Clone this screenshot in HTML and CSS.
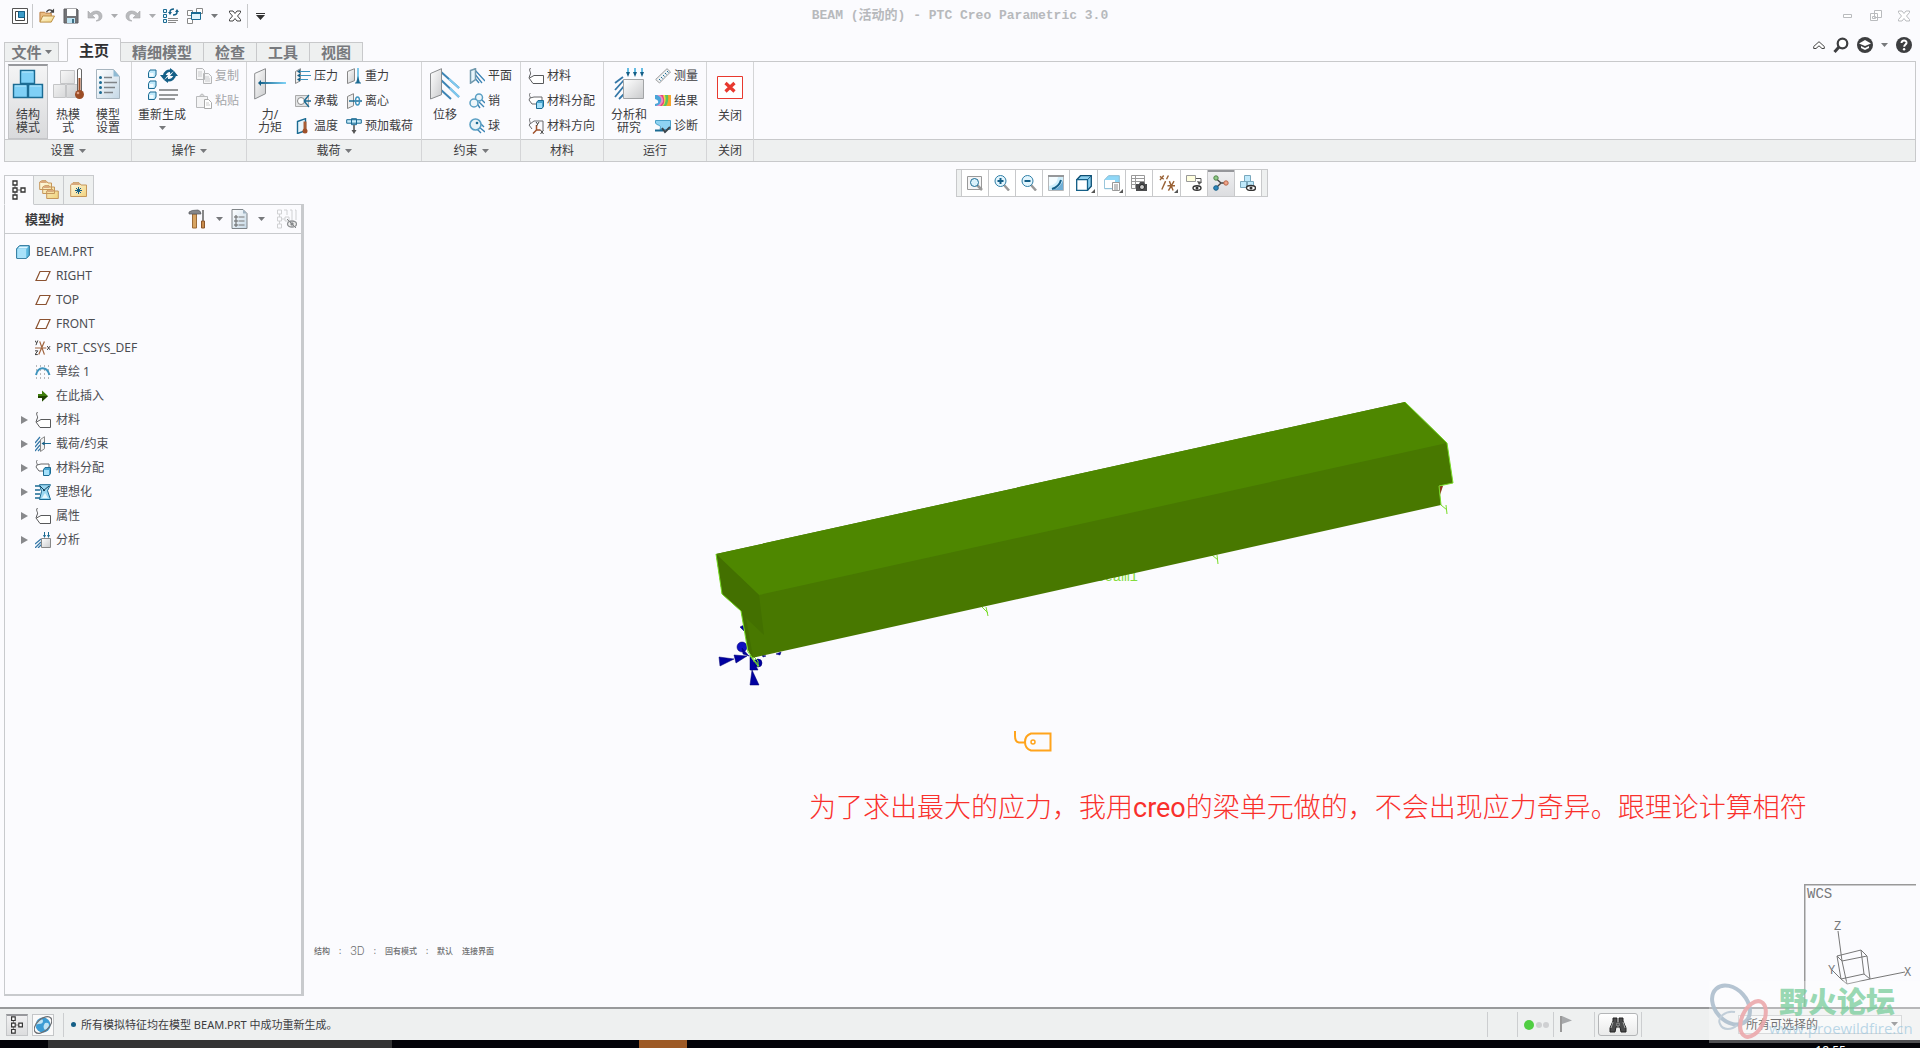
FILE: index.html
```html
<!DOCTYPE html>
<html lang="zh-CN">
<head>
    <meta charset="UTF-8">
    <meta name="viewport" content="width=device-width, initial-scale=1.0">
    <title>BEAM (活动的) - PTC Creo Parametric 3.0</title>
    <link rel="stylesheet" href="styles.css">
</head>
<body>
    <!-- icon sprite -->
    <svg class="sprite" aria-hidden="true">
        <defs>
            <linearGradient id="g-grey" x1="0" y1="0" x2="1" y2="1"><stop offset="0" stop-color="#fff"/><stop offset="1" stop-color="#c9cacc"/></linearGradient>
            <linearGradient id="g-blue" x1="0" y1="0" x2="1" y2="0"><stop offset="0" stop-color="#145f87"/><stop offset="1" stop-color="#7fd3f7"/></linearGradient>
            <linearGradient id="g-fold" x1="0" y1="0" x2="1" y2="1"><stop offset="0" stop-color="#fffbe6"/><stop offset="1" stop-color="#f0d27c"/></linearGradient>
            <linearGradient id="g-page" x1="0" y1="0" x2="1" y2="1"><stop offset="0" stop-color="#fff"/><stop offset="1" stop-color="#c5d8e6"/></linearGradient>
        </defs>
        <symbol id="caret" viewBox="0 0 7 4"><path d="M0 0h7L3.5 4z" fill="#77797c"/></symbol>
        <symbol id="app" viewBox="0 0 16 16"><path d="M.5.5h15v15H.5z" fill="#fff" stroke="#555"/><path d="M3.5 3.5h9v9h-9z" fill="#fff" stroke="#444"/><path d="M6.5 3.5h6v6h-6z" fill="#3d9cc9" stroke="#145f87"/></symbol>
        <symbol id="open" viewBox="0 0 17 16"><path d="M1 14V4h5l1 1h6v3" fill="#e9bd83" stroke="#b97b3c"/><path d="M1 14.5 4 8h12.500L13 14.500z" fill="url(#g-fold)" stroke="#b98a3c"/><path d="M8 4c1-3 4-3 6-1.500" fill="none" stroke="#444" stroke-width="1.5"/><path d="M16 0v4.500h-4.500z" fill="#444"/></symbol>
        <symbol id="save" viewBox="0 0 16 16"><path d="M1 1h13l1 1v13H1z" fill="#737477" stroke="#5c5d60"/><path d="M4 1h9v7H4z" fill="#fff"/><path d="M4 10h8v5H4z" fill="#bfe4f3"/><path d="M9 11h2v4H9z" fill="#3f6f84"/></symbol>
        <symbol id="undo" viewBox="0 0 16 12"><path d="M1 1v7h7L5.500 5.500C9 2 12 4 12 7c0 2-1 3-3 4 4 0 6-2 6-5C15 1 8-1 3.500 3.500z" fill="#b9babd" stroke="#a4a6a9" stroke-width=".6"/></symbol>
        <symbol id="regen" viewBox="0 0 32 32"><g fill="#bfe9fb" stroke="#1b6b93"><path d="M2.500 4.500 4 2h6v5L8.500 9.500h-6zM2.500 15.500 4 13h6v5L8.500 20.500h-6zM2.500 26.500 4 24h6v5l-1.500 2.500h-6z"/></g><path d="M3.500 5h4v3.500h-4zm0 11h4v3.500h-4zm0 11h4v3.500h-4z" fill="#f2fbff"/><path d="M13 21h19v2H13zm0 5h19v2H13zm0 4h16v2H13z" fill="#97999b"/><path d="M18 8c1-4 4-6 7-5M29 6c0 4-4 7-8 6" fill="none" stroke="#145f87" stroke-width="2.500"/><path d="M14 7h8l-4 5zM24 8h8l-4-5zM24 0l4 3-4 3zM22 9v6l-4-3z" fill="#145f87"/></symbol>
        <symbol id="regensm" viewBox="0 0 16 16"><path d="M.5 1.500h3v3h-3zM.5 6.500h3v3h-3zM.5 11.500h3v3h-3z" fill="#eaf8fe" stroke="#1b6b93"/><path d="M5 10h10v1H5zm0 2h10v1H5zm0 2h8v1H5z" fill="#888"/><path d="M7 4c0-2 2-3 4-3M14 4c0 2-2 3-4 3" fill="none" stroke="#145f87" stroke-width="1.500"/><path d="M5 4h4L7 7zm7 0h4l-2-3z" fill="#145f87"/></symbol>
        <symbol id="windows" viewBox="0 0 16 16"><path d="M.5 2.500h5v5h-5zM9.500.500h6v5h-6zM.5 10.500h5v5h-5z" fill="#fff" stroke="#888"/><path d="M4.500 4.500h9v7h-9z" fill="#e2f5fd" stroke="#1b6b93"/><path d="M4 4h10v2H4z" fill="#1b6b93"/></symbol>
        <symbol id="xwin" viewBox="0 0 12 11"><path d="M.5.5h3.500L6 3 8 .5h3.500v1.500L8.500 5.500l3 3.500v1.500H8L6 8l-2 2.500H.5V9l3-3.500-3-3.500z" fill="#fff" stroke="currentColor"/></symbol>
        <symbol id="qmenu" viewBox="0 0 9 7"><path d="M0 0h9v1H0zM0 2h9L4.500 7z" fill="#333"/></symbol>

        <symbol id="struct" viewBox="0 0 32 32"><path d="M8.500 2.500h14v13h-14zM1.500 16.500h14v13h-14zM16.500 16.500h14v13h-14z" fill="#7fd0f6" stroke="#1b6b93" stroke-width="1.4"/><path d="M10 4h11M3 18h11M18 18h11" stroke="#b9e8fd"/></symbol>
        <symbol id="thermal" viewBox="0 0 32 32"><path d="M8.500 2.500h14v13h-14zM1.500 16.500h12v13h-12zM14.500 16.500h12v13h-12z" fill="url(#g-grey)" stroke="#c4c5c7"/><path d="M25.500 1.500q2-2 4 0V24h-4z" fill="#fff" stroke="#666"/><path d="M26.500 10h2v14h-2z" fill="#9c4d26"/><circle cx="27.500" cy="26.500" r="4.500" fill="#9c4d26"/><circle cx="26" cy="25" r="1.300" fill="#e2a184"/></symbol>
        <symbol id="setup" viewBox="0 0 26 32"><path d="M1.500 1.500h17l6 7v22h-23z" fill="url(#g-page)" stroke="#a7b5bf"/><path d="M18.500 1.500v7h6z" fill="#8fbad3"/><g fill="#1b6b93"><circle cx="5.500" cy="9.500" r="1.500"/><circle cx="5.500" cy="14.500" r="1.500"/><circle cx="5.500" cy="19.500" r="1.500"/><circle cx="5.500" cy="24.500" r="1.500"/></g><path d="M9 9.500h8m-8 5h13m-13 5h11m-11 5h9" stroke="#7f8488" stroke-width="1.5"/></symbol>
        <symbol id="copy" viewBox="0 0 16 16"><path d="M.5.5h6l2 2v9h-8zM7.500 5.500h5l3 3v7h-8z" fill="#f6f6f7" stroke="#b5b6b8"/><path d="M2 4h4M2 6h4M2 8h4m3 1h4m-4 2h5m-5 2h5" stroke="#c9cacc"/></symbol>
        <symbol id="paste" viewBox="0 0 16 16"><path d="M.5 3.500h11v11H.5z" fill="#f4f4f5" stroke="#b9babc"/><path d="M3.500 3.500q2.500-5 5 0z" fill="#ddd" stroke="#b9babc"/><path d="M8.500 6.500h4l3 3v6h-7z" fill="#fff" stroke="#aaa"/><path d="M10 10h3m-3 2h4" stroke="#ccc"/></symbol>
        <symbol id="force" viewBox="0 0 32 32"><path d="M.7 5.500 11.500.7v25L.7 31z" fill="url(#g-grey)" stroke="#8a8c8e"/><path d="M5 14h27v2H5z" fill="url(#g-blue)"/><path d="m4 15 3-3v6z" fill="#145f87"/></symbol>
        <symbol id="pressure" viewBox="0 0 16 16"><path d="M.5 3.500 5.500.7v12L.5 15.500z" fill="#eee" stroke="#888"/><path d="M3 3.500h12M3 7.500h13M3 11.500h10" stroke="#3d93bd" stroke-width="1.2"/><path d="m2 3.500 3-2v4zm0 4 3-2v4zm0 4 3-2v4z" fill="#145f87"/></symbol>
        <symbol id="bearing" viewBox="0 0 16 16"><path d="M.5 2.500h13v11H.5z" fill="#e3e4e5" stroke="#aaa"/><circle cx="6" cy="8" r="3.500" fill="#fff" stroke="#888"/><path d="M9 8h7M9 8l5-6M9 8l5 6" stroke="#1b6b93" stroke-width="1.300"/></symbol>
        <symbol id="temp" viewBox="0 0 16 16"><path d="M2.500 3.500 10.500.7v12l-8 2.800z" fill="#e8f5fb" stroke="#1b6b93" stroke-width="1.4"/><path d="M8.500 3.500h3v8h-3z" fill="#a95c33"/><circle cx="10" cy="13" r="2.500" fill="#a0512a"/></symbol>
        <symbol id="gravity" viewBox="0 0 16 16"><path d="M1.500 3.500 8.500.7v12l-7 2.800z" fill="url(#g-grey)" stroke="#888"/><path d="M12 0v14" stroke="#7fc9ea" stroke-width="2"/><path d="m10 15 2-7 2 7z" fill="#1b6b93"/><path d="M9 15h6" stroke="#1b6b93"/></symbol>
        <symbol id="centri" viewBox="0 0 16 16"><path d="M1.500 3.500 7.500.7v12l-6 2.800z" fill="#eee" stroke="#888"/><path d="M3 8h13" stroke="#1b6b93" stroke-width="1.5"/><ellipse cx="11.500" cy="8" rx="2" ry="4" fill="none" stroke="#3d93bd" stroke-width="1.5"/></symbol>
        <symbol id="preload" viewBox="0 0 16 16"><path d="M.7 1.700h14.600v3.500H.7zM5.500.7h5v6h-5z" fill="#c9ecfa" stroke="#1b6b93"/><path d="M7 7h2v7H7z" fill="#777"/><path d="m5.500 12 2.500 4 2.500-4z" fill="#555"/></symbol>
        <symbol id="displace" viewBox="0 0 32 32"><path d="m11 3 19 17M11 11l19 18M11 21l11 10" stroke="#3d85b5" stroke-width="2"/><path d="m20 11 10 9M21 20l9 9" stroke="#7fc9ef" stroke-width="2"/><path d="M1.500 5.500 12.500.7v26L1.500 31z" fill="url(#g-grey)" stroke="#8a8c8e"/></symbol>
        <symbol id="plane" viewBox="0 0 16 16"><path d="m5 1 11 12M5 5l8 10M5 9l5 6" stroke="#3d85b5" stroke-width="1.300"/><path d="M1.500 2.500 6.500.7v11l-5 3.500z" fill="#e6f4fa" stroke="#7199ad" stroke-width="1.5"/></symbol>
        <symbol id="pin" viewBox="0 0 16 16"><path d="m7 9 4 6m-1-6 5 5m-2-7 3 3" stroke="#3d85b5" stroke-width="1.4"/><circle cx="10" cy="4.500" r="3.500" fill="#eef6fa" stroke="#5a9fc4" stroke-width="1.5"/><circle cx="5" cy="10" r="4" fill="#eef6fa" stroke="#5a9fc4" stroke-width="1.5"/></symbol>
        <symbol id="ball" viewBox="0 0 16 16"><path d="m7 10 5 5m-2-6 6 5m-4-8 3 3" stroke="#3d85b5" stroke-width="1.4"/><circle cx="6.500" cy="6.500" r="5.500" fill="#e9f2f7" stroke="#5a9fc4" stroke-width="1.6"/><circle cx="8" cy="5" r="1.300" fill="#1b6b93"/></symbol>
        <symbol id="material" viewBox="0 0 16 16"><path d="M2.500 0C0 3 4 4 2 7l-1 3 4 5.500h10.500v-8H6L1.500 10" fill="#fff" stroke="#58595b"/></symbol>
        <symbol id="matassign" viewBox="0 0 16 16"><path d="M2.500 0C0 2 3 4 2 5L1 7l3 4h10V4H6L2 5" fill="#fff" stroke="#66676a"/><path d="m8.500 9.500 1.500-2h5.500v6l-1.500 2H8.500z" fill="#4aa5d0" stroke="#1b6b93"/><path d="M9 10h5v5H9z" fill="#a4e0fa"/></symbol>
        <symbol id="matorient" viewBox="0 0 16 16"><path d="M2.500 0C0 2 3 4 2 6l-1 1 3 4m-2-5 4-3h9v9" fill="none" stroke="#66676a"/><path d="M8.500 7v5h4M8.500 12 5 15.500" fill="none" stroke="#a0512a" stroke-width="1.5"/><path d="m8 4 1.500 2M11 4 8.500 8M12.500 12l3 4m0-4-3 4" stroke="#444"/></symbol>
        <symbol id="analysis" viewBox="0 0 32 32"><path d="M2 15 10 9M2 22l9-10M2 29l9-11M6 31l5-5" stroke="#3578a8" stroke-width="1.800"/><path d="M15 0v6m7-6v6m7-6v6" stroke="#65bde4" stroke-width="2"/><path d="m13 4 2 5 2-5zm7 0 2 5 2-5zm7 0 2 5 2-5z" fill="#145f87"/><path d="M10.500 11.500h20v19h-20z" fill="url(#g-grey)" stroke="#a2a4a6"/></symbol>
        <symbol id="measure" viewBox="0 0 16 16"><path d="M.7 11.500 12 .7 15.500 4 4.500 15z" fill="#eef1f3" stroke="#999"/><path d="m4 11 1.500 1.500M6 9l1.500 1.500M8 7l1.500 1.500m.5-3.500 1.500 1.500m.5-3.500 1.500 1.500" stroke="#1b6b93"/></symbol>
        <symbol id="results" viewBox="0 0 16 16"><path d="M0 2h16v11H1z" fill="#f7a52c"/><path d="M0 2h13q1 7-2 11H1z" fill="#5cc45c"/><path d="M0 2h10q2 7-2 11H1z" fill="#f5dc4a"/><path d="M0 2h8q3 8-1 11H1z" fill="#e8457f"/><path d="M0 2h5q4 3 3 7l-3 4H1z" fill="#e98fc4"/><path d="M0 2h2q5 2 4 6-1 4-5 5H0z" fill="#4aa5d9"/><path d="M0 6q4 1 3 4l-3 1z" fill="#fbfbfe"/></symbol>
        <symbol id="diagnose" viewBox="0 0 16 16"><path d="M.5 2.500h15v9H5C7 6 2 8 .5 5z" fill="#8fd3f2" stroke="#4aa0c8"/><path d="M0 12.500h8" stroke="#1b6b93" stroke-width="2"/><path d="m7 10 3 4 5-5" fill="none" stroke="#39444b" stroke-width="2"/></symbol>
        <symbol id="closebox" viewBox="0 0 26 23"><path d="M.5.5h25v22H.5z" fill="#fff" stroke="#e8392f"/><path d="m8.500 7 9 8.500m0-8.500-9 8.500" stroke="#e8392f" stroke-width="3.200"/></symbol>

        <symbol id="min" viewBox="0 0 10 4"><path d="M.5.5h8v3h-8z" fill="#fff" stroke="#b9bbbe"/></symbol>
        <symbol id="restore" viewBox="0 0 12 12"><path d="M4.500.5h7v7h-7zM.5 3.500h7v7h-7zM2.500 6.500h3v2h-3z" fill="#fff" stroke="#b9bbbe"/></symbol>
        <symbol id="up" viewBox="0 0 12 8"><path d="M.7 5.500 6 .7l5.300 4.800v2H9L6 4.800 3 7.500H.7z" fill="#fff" stroke="#444"/></symbol>
        <symbol id="search" viewBox="0 0 16 16"><circle cx="9.500" cy="6.500" r="4.800" fill="#fff" stroke="#3d3e40" stroke-width="2.200"/><path d="m6 10-4.500 5" stroke="#3d3e40" stroke-width="3"/></symbol>
        <symbol id="learn" viewBox="0 0 16 16"><circle cx="8" cy="8" r="8" fill="#3d3e40"/><path d="M2 6.500 8 3l6 3.500L8 9z" fill="#fff"/><path d="M4 9l4 2 4-2v2l-4 2-4-2z" fill="#fff"/></symbol>
        <symbol id="help" viewBox="0 0 16 16"><circle cx="8" cy="8" r="8" fill="#3d3e40"/><path d="M5.500 6c0-3.500 5.500-3 5 0-.3 1.500-2.300 1.500-2.300 3.800" fill="none" stroke="#fff" stroke-width="2"/><circle cx="8.100" cy="12.300" r="1.200" fill="#fff"/></symbol>

        <symbol id="tree" viewBox="0 0 14 20"><path d="M3 5v3m0 4v3M5 10h4" stroke="#777" fill="none"/><path d="M1 1h4v4H1zM1 8h4v4H1zM1 15h4v4H1zM9 8h4v4H9z" fill="#fff" stroke="#333" stroke-width="1.300"/></symbol>
        <symbol id="folders" viewBox="0 0 20 20"><path d="M.7 9.500V2L3 .7h4L9 3h3.500v6.500zM3.700 13.500V7L6 5.700h4L11 7h4.500v6.500zM7.700 18.500V11L10 9.700h4L15 11h4.300v7.500z" fill="url(#g-fold)" stroke="#c5965a"/><path d="M2 1h5l1 2H1zm3 5h5l1 2H4zm4 4h5l1 2H8z" fill="#d9a97c"/></symbol>
        <symbol id="favfold" viewBox="0 0 18 16"><path d="M.7 14.500V3L3 .7h6L11 3h5.500v11.500z" fill="url(#g-fold)" stroke="#c5965a"/><path d="M2 1h7l1 2H1z" fill="#d9a97c"/><path d="M8.500 5v7M5 8.500h7M6 6l5 5m0-5-5 5" stroke="#145f87"/></symbol>
        <symbol id="hammer" viewBox="0 0 18 20"><path d="M3.500 5h4v14h-4z" fill="#d8a563" stroke="#9b6b38"/><path d="M0 3q2-2 9-2 3 1 3 4H9L8 5H3L0 5z" fill="#85878a" stroke="#55585c" stroke-width=".7"/><path d="M14 1v11" stroke="#888" stroke-width="2"/><path d="M12.500 12h3v7h-3z" fill="#c98d4d" stroke="#8b572c"/></symbol>
        <symbol id="listpage" viewBox="0 0 17 20"><path d="M.5.5h11l4 4v15H.5z" fill="url(#g-page)" stroke="#7f8488"/><path d="M11.500.5v4h4z" fill="#9fb3c2"/><circle cx="4.500" cy="8" r="1.200" fill="none" stroke="#555"/><circle cx="4.500" cy="12" r="1.200" fill="none" stroke="#555"/><circle cx="4.500" cy="16" r="1.200" fill="none" stroke="#555"/><path d="M7 8h6m-6 4h6m-6 4h6" stroke="#777"/></symbol>
        <symbol id="treeoff" viewBox="0 0 20 20"><path d="M.5 1h4v4h-4zM.5 8h4v4h-4zM.5 15h4v4h-4zM8 8h4v4H8zM2.500 5v3m0 4v3M4.500 10H8M7 1h3v5m3-5h2v10m3-10h1v10" fill="none" stroke="#d0d1d3"/><ellipse cx="15" cy="15" rx="4.500" ry="3" fill="#eee" stroke="#8e9093" stroke-width="1.300"/><circle cx="15" cy="15" r="1.700" fill="#85878a"/><path d="m10 10 9 9" stroke="#85878a"/></symbol>
        <symbol id="part" viewBox="0 0 14 14"><path d="M.7 3.700 3.500.7h9.800v9.600l-2.800 3H.7z" fill="#5cb9e0" stroke="#1b6b93"/><path d="M1.200 4h9v9h-9z" fill="#a9e2fa"/><path d="m1.700 3.500 2-2h8.800l-2 2z" fill="#dff5ff"/></symbol>
        <symbol id="datum" viewBox="0 0 16 16"><path d="M5 3.500h10L11 12.500H1z" fill="#fff" stroke="#8b5231" stroke-width="1.2"/></symbol>
        <symbol id="csys" viewBox="0 0 17 16"><path d="M0 8h12M5 1l5 14M10 1 4 15" stroke="#a0653f" stroke-width="1.300"/><path d="m0 0 1.500 2.500M3 0 1 5M0 11h3l-3 4h3M13 6l3 4m0-4-3 4" fill="none" stroke="#333"/></symbol>
        <symbol id="sketch" viewBox="0 0 16 14"><path d="M1 1h14M1 5h14M1 9h14M1 13h14" stroke="#777" stroke-dasharray="1 3"/><path d="M1 10C3 1 12 1 14.500 10" fill="none" stroke="#3d93bd" stroke-width="2"/></symbol>
        <symbol id="insert" viewBox="0 0 16 16"><path d="M3 6h4V2.500L13 8l-6 5.500V10H3z" fill="#3f7d0a"/><path d="M3 8h10l-6 5.500V10H3z" fill="#204400"/></symbol>
        <symbol id="loads" viewBox="0 0 16 16"><path d="m0 7 5-6M0 11l5-6M0 15l5-6m-2 6 3-3" stroke="#3578a8" stroke-width="1.2"/><path d="M5.500 3.500 9.500.7v12l-4 2.800z" fill="#f2f2f2" stroke="#888"/><path d="M7 7.500h9" stroke="#1b6b93"/><path d="m6.500 7.500 3-2v4z" fill="#145f87"/></symbol>
        <symbol id="ideal" viewBox="0 0 16 16"><path d="M0 2h5M0 6h5M0 10h5M0 14h5" stroke="#1b6b93" stroke-width="1.5"/><path d="M4.500.7h11l-3 6 3 8.800h-11l2-8z" fill="#9ad6f0" stroke="#1b6b93"/><path d="m5 2 5 5M14 2 8 7" fill="none" stroke="#123f58"/><path d="m7 14 3-5 3 5z" fill="#e6f7fd"/></symbol>
        <symbol id="study" viewBox="0 0 16 16"><path d="m0 12 6-5M0 16l6-6m-3 6 4-4" stroke="#3578a8" stroke-width="1.300"/><path d="M9.500 0v4m4-4v4" stroke="#1b6b93"/><path d="m8 3 1.500 3L11 3zm4 0 1.500 3L15 3z" fill="#1b6b93"/><path d="M6.500 6.500h9v9h-9z" fill="url(#g-grey)" stroke="#888"/></symbol>

        <symbol id="zoomfit" viewBox="0 0 16 16"><path d="M.5 1.500h14v13H.5z" fill="#f5f5f6" stroke="#999"/><path d="m9 9 6 6" stroke="#999" stroke-width="2.500"/><circle cx="7.500" cy="7.500" r="4" fill="#d9f1fb" stroke="#1b6b93"/></symbol>
        <symbol id="zoomin" viewBox="0 0 16 16"><path d="m10 10 5 5.500" stroke="#999" stroke-width="2.500"/><circle cx="6.500" cy="6" r="5.500" fill="#e2f5fd" stroke="#2f7ea6"/><path d="M3.500 6h6m-3-3v6" stroke="#145f87" stroke-width="2"/></symbol>
        <symbol id="zoomout" viewBox="0 0 16 16"><path d="m10 10 5 5.500" stroke="#999" stroke-width="2.500"/><circle cx="6.500" cy="6" r="5.500" fill="#e2f5fd" stroke="#2f7ea6"/><path d="M3.500 6h6" stroke="#145f87" stroke-width="2"/></symbol>
        <symbol id="repaint" viewBox="0 0 16 16"><path d="M.5.5h15v15H.5z" fill="#cfeefb" stroke="#b5b7b9"/><path d="M0 0h16v2H0z" fill="#96989a"/><path d="M15 5v10H5q8-3 10-10z" fill="#6faed6"/><path d="M1 2h9q-1 8-9 9z" fill="#f4fcff"/><path d="M4 14q7-2 9-9" fill="none" stroke="#145f87" stroke-width="2"/></symbol>
        <symbol id="shade" viewBox="0 0 16 16"><path d="M.7 4.700 4.500.7h10.800v10.600l-3.800 4H.7z" fill="#8ed0ee" stroke="#0f4f73" stroke-width="1.300"/><path d="M.7 4.700h10.800v10.600H.7z" fill="#fff" stroke="#145f87" stroke-width="1.300"/><path d="m11.500 4.700 3.800-4" stroke="#145f87"/></symbol>
        <symbol id="views" viewBox="0 0 16 16"><path d="M.7 4.700 4.500.7h10.800v9l-4 4H.7z" fill="#8fd8f8" stroke="#8bbcd3"/><path d="M1 5h10v8H1z" fill="#fff"/><path d="M8.500 7.500h7v8h-7z" fill="#fff" stroke="#999"/><path d="M10 10h4m-4 2h4m-4 2h4" stroke="#888"/></symbol>
        <symbol id="snap" viewBox="0 0 16 16"><path d="M.5.5h13v13H.5zM.5 3.500h13M.5 6.500h13M.5 9.500h13M4.500.5v13" fill="#fff" stroke="#999"/><path d="M5 9h3l1-2h4l1 2h2v7H5z" fill="#4b4c4e"/><circle cx="11" cy="12" r="2.500" fill="#ccc" stroke="#222"/></symbol>
        <symbol id="datums" viewBox="0 0 17 16"><path d="m1 1 4 3M5 0 1 5M10 0 8 4M7 6 3 15M9 11h8M11 6l4 10M16 6l-6 10" stroke="#9a6236" stroke-width="1.5"/></symbol>
        <symbol id="annot" viewBox="0 0 16 16"><path d="M.5.5h9v6h-9z" fill="#ffffdf" stroke="#999"/><path d="M10 3.500h5v4" fill="none" stroke="#555"/><path d="m11 6 5 1-3 3z" fill="#555"/><ellipse cx="11" cy="13" rx="4" ry="2.300" fill="#fff" stroke="#333" stroke-width="1.4"/><circle cx="11" cy="13" r="1.500" fill="#333"/></symbol>
        <symbol id="spin" viewBox="0 0 16 16"><path d="M3 3.500 8 8m0 0h5M8 8l-5 5" stroke="#444" stroke-width="1.4"/><circle cx="3" cy="3" r="2.200" fill="#8fc988" stroke="#508248"/><circle cx="13" cy="8" r="2.200" fill="#f0a48a" stroke="#b8684a"/><circle cx="3" cy="13" r="2.300" fill="#2f86bd" stroke="#145f87"/></symbol>
        <symbol id="simshow" viewBox="0 0 16 16"><path d="M4.500.5h6v6h-6zM.5 6.500h6v6h-6zM7.500 6.500h6v6h-6z" fill="#bfe9fb" stroke="#7aa8bd"/><ellipse cx="11" cy="13" rx="4.500" ry="2.500" fill="#fff" stroke="#333" stroke-width="1.4"/><circle cx="11" cy="13" r="1.500" fill="#333"/></symbol>
        <symbol id="globe" viewBox="0 0 18 18"><circle cx="9" cy="9" r="7.500" fill="#3c9cd4"/><path d="M5 4q4-2 4 1t-4 3-2 3l-1-4zm6 3q4-1 4 2t-4 5q-3-3 0-7z" fill="#bfe4f5"/><ellipse cx="9" cy="9" rx="10.500" ry="6" fill="none" stroke="#6b6e72" stroke-width="1.200" transform="rotate(-42 9 9)"/></symbol>
        <symbol id="flag" viewBox="0 0 12 17"><path d="M1 0v16" stroke="#999" stroke-width="2"/><path d="m2 0 10 4.500L2 8z" fill="#a7a9ab"/></symbol>
        <symbol id="binoc" viewBox="0 0 18 16"><path d="M4 1h4v4l1 1 1-1V1h4v3l3 7v4h-5l-1-5H7l-1 5H1v-4l3-7z" fill="#4a4b4c" stroke="#222"/><path d="m4 5-2 6M14 5l2 6M8 6h2v3H8z" stroke="#a3a5a5"/></symbol>
    </svg>

    <header class="titlebar">
        <div class="quick">
            <button aria-label="窗口"><svg class="i16"><use href="#app"/></svg></button>
            <span class="sep"></span>
            <button class="after-sep" aria-label="打开"><svg class="i16"><use href="#open"/></svg></button>
            <button aria-label="保存"><svg class="i16"><use href="#save"/></svg></button>
            <button aria-label="撤消"><svg class="i16"><use href="#undo"/></svg></button>
            <button class="drop muted" aria-label="撤消列表"><svg class="caret"><use href="#caret"/></svg></button>
            <button aria-label="重做"><svg class="i16 flip"><use href="#undo"/></svg></button>
            <button class="drop muted" aria-label="重做列表"><svg class="caret"><use href="#caret"/></svg></button>
            <button aria-label="重新生成"><svg class="i16"><use href="#regensm"/></svg></button>
            <button aria-label="切换窗口"><svg class="i16"><use href="#windows"/></svg></button>
            <button class="drop" aria-label="窗口列表"><svg class="caret"><use href="#caret"/></svg></button>
            <button class="after-sep" aria-label="关闭窗口"><svg class="i12 dark"><use href="#xwin"/></svg></button>
            <span class="sep"></span>
            <button aria-label="自定义"><svg class="i9"><use href="#qmenu"/></svg></button>
        </div>
        <h1 class="title">BEAM (活动的) - PTC Creo Parametric 3.0</h1>
        <div class="winctl">
            <button aria-label="最小化"><svg class="i-min"><use href="#min"/></svg></button>
            <button aria-label="还原"><svg class="i12"><use href="#restore"/></svg></button>
            <button aria-label="退出"><svg class="i12"><use href="#xwin"/></svg></button>
        </div>
    </header>

    <nav class="tabs">
        <button class="tab file">文件<svg class="caret"><use href="#caret"/></svg></button>
        <button class="tab active">主页</button>
        <button class="tab">精细模型</button>
        <button class="tab">检查</button>
        <button class="tab">工具</button>
        <button class="tab">视图</button>
        <div class="help">
            <button aria-label="最小化功能区"><svg class="i12"><use href="#up"/></svg></button>
            <button aria-label="搜索"><svg class="i16"><use href="#search"/></svg></button>
            <button aria-label="学习"><svg class="i16"><use href="#learn"/></svg></button>
            <button aria-label="学习列表"><svg class="caret"><use href="#caret"/></svg></button>
            <button aria-label="帮助"><svg class="i16"><use href="#help"/></svg></button>
        </div>
    </nav>

    <div class="ribbon">
        <section class="group g-setup">
            <div class="tools">
                <button class="big on"><svg class="i32"><use href="#struct"/></svg><span>结构<br>模式</span></button>
                <button class="big"><svg class="i32"><use href="#thermal"/></svg><span>热模<br>式</span></button>
                <button class="big"><svg class="i32"><use href="#setup"/></svg><span>模型<br>设置</span></button>
            </div>
            <div class="foot">设置<svg class="caret"><use href="#caret"/></svg></div>
        </section>
        <section class="group g-ops">
            <div class="tools">
                <button class="big wide"><svg class="i32"><use href="#regen"/></svg><span>重新生成</span><svg class="caret"><use href="#caret"/></svg></button>
                <div class="col">
                    <button class="small" disabled><svg class="i16"><use href="#copy"/></svg>复制</button>
                    <button class="small" disabled><svg class="i16"><use href="#paste"/></svg>粘贴</button>
                </div>
            </div>
            <div class="foot">操作<svg class="caret"><use href="#caret"/></svg></div>
        </section>
        <section class="group g-load">
            <div class="tools">
                <button class="big"><svg class="i32"><use href="#force"/></svg><span>力/<br>力矩</span></button>
                <div class="col">
                    <button class="small"><svg class="i16"><use href="#pressure"/></svg>压力</button>
                    <button class="small"><svg class="i16"><use href="#bearing"/></svg>承载</button>
                    <button class="small"><svg class="i16"><use href="#temp"/></svg>温度</button>
                </div>
                <div class="col">
                    <button class="small"><svg class="i16"><use href="#gravity"/></svg>重力</button>
                    <button class="small"><svg class="i16"><use href="#centri"/></svg>离心</button>
                    <button class="small"><svg class="i16"><use href="#preload"/></svg>预加载荷</button>
                </div>
            </div>
            <div class="foot">载荷<svg class="caret"><use href="#caret"/></svg></div>
        </section>
        <section class="group g-cons">
            <div class="tools">
                <button class="big"><svg class="i32"><use href="#displace"/></svg><span>位移</span></button>
                <div class="col">
                    <button class="small"><svg class="i16"><use href="#plane"/></svg>平面</button>
                    <button class="small"><svg class="i16"><use href="#pin"/></svg>销</button>
                    <button class="small"><svg class="i16"><use href="#ball"/></svg>球</button>
                </div>
            </div>
            <div class="foot">约束<svg class="caret"><use href="#caret"/></svg></div>
        </section>
        <section class="group g-mat">
            <div class="tools">
                <div class="col">
                    <button class="small"><svg class="i16"><use href="#material"/></svg>材料</button>
                    <button class="small"><svg class="i16"><use href="#matassign"/></svg>材料分配</button>
                    <button class="small"><svg class="i16"><use href="#matorient"/></svg>材料方向</button>
                </div>
            </div>
            <div class="foot">材料</div>
        </section>
        <section class="group g-run">
            <div class="tools">
                <button class="big"><svg class="i32"><use href="#analysis"/></svg><span>分析和<br>研究</span></button>
                <div class="col">
                    <button class="small"><svg class="i16"><use href="#measure"/></svg>测量</button>
                    <button class="small"><svg class="i16"><use href="#results"/></svg>结果</button>
                    <button class="small"><svg class="i16"><use href="#diagnose"/></svg>诊断</button>
                </div>
            </div>
            <div class="foot">运行</div>
        </section>
        <section class="group g-close">
            <div class="tools">
                <button class="big"><svg class="i-close"><use href="#closebox"/></svg><span>关闭</span></button>
            </div>
            <div class="foot">关闭</div>
        </section>
        <div class="group rest"><div class="tools"></div><div class="foot"></div></div>
    </div>

    <main class="work">
        <aside class="side">
            <div class="sidetabs">
                <button class="on" aria-label="模型树"><svg class="i20"><use href="#tree"/></svg></button>
                <button aria-label="文件夹浏览器"><svg class="i20"><use href="#folders"/></svg></button>
                <button aria-label="收藏夹"><svg class="i18"><use href="#favfold"/></svg></button>
            </div>
            <div class="panel">
                <div class="panelhead">
                    <h2>模型树</h2>
                    <button aria-label="设置"><svg class="i20"><use href="#hammer"/></svg></button>
                    <button class="arrow" aria-label="设置列表"><svg class="caret"><use href="#caret"/></svg></button>
                    <button aria-label="显示"><svg class="i20"><use href="#listpage"/></svg></button>
                    <button class="arrow" aria-label="显示列表"><svg class="caret"><use href="#caret"/></svg></button>
                    <button class="hide" aria-label="隐藏树" disabled><svg class="i20"><use href="#treeoff"/></svg></button>
                </div>
                <ul class="modeltree">
                    <li class="root"><svg class="i14"><use href="#part"/></svg>BEAM.PRT</li>
                    <li><svg class="i16"><use href="#datum"/></svg>RIGHT</li>
                    <li><svg class="i16"><use href="#datum"/></svg>TOP</li>
                    <li><svg class="i16"><use href="#datum"/></svg>FRONT</li>
                    <li><svg class="i16"><use href="#csys"/></svg>PRT_CSYS_DEF</li>
                    <li><svg class="i16"><use href="#sketch"/></svg>草绘 1</li>
                    <li><svg class="i16"><use href="#insert"/></svg>在此插入</li>
                    <li class="more"><svg class="i16"><use href="#material"/></svg>材料</li>
                    <li class="more"><svg class="i16"><use href="#loads"/></svg>载荷/约束</li>
                    <li class="more"><svg class="i16"><use href="#matassign"/></svg>材料分配</li>
                    <li class="more"><svg class="i16"><use href="#ideal"/></svg>理想化</li>
                    <li class="more"><svg class="i16"><use href="#material"/></svg>属性</li>
                    <li class="more"><svg class="i16"><use href="#study"/></svg>分析</li>
                </ul>
            </div>
        </aside>

        <div class="canvas">
            <div class="viewbar">
                <button aria-label="重新调整"><svg class="i16"><use href="#zoomfit"/></svg></button>
                <button aria-label="放大"><svg class="i16"><use href="#zoomin"/></svg></button>
                <button aria-label="缩小"><svg class="i16"><use href="#zoomout"/></svg></button>
                <button aria-label="重画"><svg class="i16"><use href="#repaint"/></svg></button>
                <button class="menu" aria-label="显示样式"><svg class="i16"><use href="#shade"/></svg></button>
                <button class="menu" aria-label="已保存方向"><svg class="i16"><use href="#views"/></svg></button>
                <button aria-label="视图管理器"><svg class="i16"><use href="#snap"/></svg></button>
                <button class="menu" aria-label="基准显示"><svg class="i16"><use href="#datums"/></svg></button>
                <button aria-label="注释显示"><svg class="i16"><use href="#annot"/></svg></button>
                <button class="on" aria-label="旋转中心"><svg class="i16"><use href="#spin"/></svg></button>
                <button aria-label="模拟显示"><svg class="i16"><use href="#simshow"/></svg></button>
            </div>

            <svg class="beam" viewBox="0 0 770 320" role="img" aria-label="BEAM">
                <!-- constraint cones -->
                <g fill="#0000a0" stroke="#000070" stroke-width=".5">
                    <path d="m19 277 15 2-14 7zM34 275l13 1-11 7zM50 275l8 15h-8zM52 290l7 15h-9zM40 247l4-2v6zM62 275l4 1-3 1zM76 274l5-2-1 3z"/>
                    <circle cx="42" cy="267" r="5" fill="#1010c0"/><circle cx="58" cy="283" r="4"/><path d="m42 268 7 8-6-2z"/>
                </g>
                <text x="396" y="201" class="beamname">Beam1</text>
                <path d="m282 227 6 6m-2-6 2 9m174-81 6 5m-2-5v0M512 175l6 5m-1-5 1 9M741 125l6 5m-1-5 1 9" class="leader"/>
                <path d="M50 276l8 10m-5-10 5 5v6" class="leader"/>
                <path d="M739 106h4l-3 9z" fill="#8c3b1b"/>
                <path d="M16 174 705 22l42 41 6 40-14 3 2 19L52 278l-4-8-7-39-19-17z" fill="#487800"/>
                <path d="M16 174 705 22l42 41L59 215z" fill="#4e8700"/>
                <path d="m16 174 43 41 5 40-18-17 7 39-5-7-7-39-19-17z" fill="#437000"/>
                <path d="m16 174 6 40 19 17 7 41 11 14M705 22l42 41 6 40-14 3 2 19" class="edge"/>
            </svg>

            <svg class="tag" viewBox="0 0 40 24" aria-hidden="true"><path d="M2 1v5q0 6 4 6.500h6M18 3.500h19.500v17H18q-6-2-6-8.500t6-8.500z" fill="none" stroke="#ffa41c" stroke-width="2"/><circle cx="20" cy="12" r="2" fill="none" stroke="#ffa41c" stroke-width="1.5"/></svg>

            <p class="note">为了求出最大的应力，我用<span>creo</span>的梁单元做的，不会出现应力奇异。跟理论计算相符</p>

            <div class="mode"><span>结构</span><span>:</span><b>3D</b><span>:</span><span>固有模式</span><span>:</span><span>默认</span><span>连接界面</span></div>

            <svg class="wcs" viewBox="0 0 112 123" role="img" aria-label="WCS">
                <path d="M.5 123V.5H112" fill="none" stroke="#999" stroke-width="2"/>
                <path d="m33 72 24-6 6 6-25 5zM37 95l23-5 6 5-23 5zM33 72l4 23M57 66l3 24M63 72l3 23M38 77l5 23M34 47l4 30M66 95l35-7M37 95l-9-9" fill="none" stroke="#777"/>
                <text x="3" y="14" class="wcsname">WCS</text>
                <text x="30" y="46">Z</text><text x="24" y="90">Y</text><text x="100" y="92">X</text>
            </svg>
        </div>
    </main>

    <footer class="status">
        <button class="on" aria-label="导航器"><svg class="i18"><use href="#tree"/></svg></button>
        <button aria-label="浏览器"><svg class="i18"><use href="#globe"/></svg></button>
        <p class="msg">所有模拟特征均在模型 BEAM.PRT 中成功重新生成。</p>
        <div class="cell blank"></div>
        <div class="cell lights"><i></i><i></i><i></i></div>
        <div class="cell flag"><svg class="i-flag"><use href="#flag"/></svg></div>
        <div class="cell find"><button aria-label="查找"><svg class="i18"><use href="#binoc"/></svg></button></div>
        <div class="cell filter">
            <select aria-label="选择过滤器"><option>所有可选择的</option></select>
            <svg class="caret"><use href="#caret"/></svg>
        </div>
    </footer>
    <div class="taskbar"><span class="search-slot"></span><span class="app-slot"></span><time>18:55</time></div>

    <div class="watermark">
        <svg viewBox="0 0 60 60" aria-hidden="true">
            <g fill="none">
                <ellipse cx="22" cy="24" rx="16" ry="22" transform="rotate(-42 22 24)" stroke="#aebfce" stroke-width="4"/>
                <ellipse cx="44" cy="38" rx="11" ry="19" transform="rotate(25 44 38)" stroke="#eca9ac" stroke-width="4"/>
                <path d="M26 31c-10-2-18 6-15 12 3 7 12 6 17 1" stroke="#bccad6" stroke-width="2"/>
            </g>
        </svg>
        <div><strong>野火论坛</strong><span>www.proewildfire.cn</span></div>
    </div>
</body>
</html>
```
FILE: styles.css
```css
* {
    box-sizing: border-box;
}
body {
    margin: 0;
    height: 100vh;
    display: flex;
    flex-direction: column;
    overflow: hidden;
    position: relative;
    background-color: #fbfbfe;
    color: #3c3c3e;
    font: 12px/16px "Noto Sans", "Noto Sans CJK SC", sans-serif;
}
button {
    display: flex;
    align-items: center;
    justify-content: center;
    margin: 0;
    padding: 0;
    border: none;
    background: none;
    color: inherit;
    font: inherit;
    white-space: nowrap;
}
h1, h2, p, ul {
    margin: 0;
    padding: 0;
}
svg {
    display: block;
    flex: none;
}
.sprite {
    position: absolute;
    width: 0;
    height: 0;
}
.caret { width: 7px; height: 4px; }
.i9 { width: 9px; height: 7px; }
.i12 { width: 12px; height: 12px; }
.i14 { width: 14px; height: 14px; }
.i16 { width: 16px; height: 16px; }
.i18 { width: 18px; height: 18px; }
.i20 { width: 20px; height: 20px; }
.i32 { width: 32px; height: 32px; }
.i-min { width: 10px; height: 4px; }
.i-close { width: 26px; height: 23px; }
.i-flag { width: 12px; height: 17px; }
.flip { transform: scaleX(-1); }
.dark { color: #444; }

/* title bar */
.titlebar {
    display: grid;
    grid-template-columns: 1fr auto 1fr;
    align-items: center;
    height: 32px;
}
.quick {
    display: flex;
    align-items: center;
    padding-left: 8px;
}
.quick button {
    width: 24px;
    height: 24px;
}
.quick .drop {
    width: 14px;
}
.quick .muted {
    opacity: 0.6;
}
.quick .after-sep {
    margin-left: 2px;
}
.sep {
    width: 1px;
    height: 24px;
    background-color: #c8c9cb;
}
.title {
    color: #b7b9bc;
    font: bold 13px/16px "Liberation Mono", "Noto Sans CJK SC", monospace;
}
.winctl {
    display: flex;
    justify-content: flex-end;
    padding-right: 2px;
    color: #b9bbbe;
}
.winctl button {
    width: 28px;
    height: 24px;
}

/* ribbon tabs */
.tabs {
    display: flex;
    align-items: flex-end;
    height: 30px;
    padding-left: 4px;
    margin-bottom: -1px;
    position: relative;
}
.tab {
    height: 20px;
    padding: 0 11px;
    border: 1px solid #c8c9cb;
    border-left: none;
    background-color: #eef0f0;
    color: #77797d;
    font: bold 15px/16px "Noto Sans CJK SC", sans-serif;
}
.tab.file {
    gap: 3px;
    width: 55px;
    padding: 0;
    margin-right: 8px;
    border-left: 1px solid #c8c9cb;
}
.tab.active {
    height: 24px;
    border-left: 1px solid #c8c9cb;
    border-bottom-color: #fbfbfe;
    border-radius: 2px 2px 0 0;
    background-color: #fbfbfe;
    color: #303032;
}
.help {
    display: flex;
    align-items: center;
    gap: 8px;
    height: 34px;
    margin-left: auto;
    padding-right: 8px;
}

/* ribbon */
.ribbon {
    display: flex;
    height: 101px;
    margin: 0 4px;
    border: 1px solid #c8c9cb;
}
.group {
    display: flex;
    flex-direction: column;
    border-right: 1px solid #d4d5d7;
}
.group.rest {
    flex: 1;
    border-right: none;
}
.tools {
    display: flex;
    flex: 1;
    padding-top: 2px;
}
.foot {
    display: flex;
    align-items: center;
    justify-content: center;
    gap: 4px;
    height: 22px;
    border-top: 1px solid #c8c9cb;
    background-color: #eef0f0;
}
.g-setup { width: 127px; }
.g-setup .tools { padding-left: 3px; }
.g-ops { width: 115px; }
.g-ops .tools { padding-left: 4px; gap: 8px; }
.g-load { width: 175px; }
.g-load .tools { padding-left: 3px; gap: 5px; }
.g-load .col + .col { margin-left: 3px; }
.g-cons { width: 99px; }
.g-cons .tools { padding-left: 3px; gap: 4px; }
.g-mat { width: 83px; }
.g-mat .tools { padding-left: 7px; }
.g-run { width: 103px; }
.g-run .tools { padding-left: 5px; gap: 6px; }
.g-close { width: 47px; }
.g-close .tools { padding-left: 3px; }
.big {
    flex-direction: column;
    justify-content: flex-start;
    width: 40px;
    height: 75px;
    padding-top: 4px;
    line-height: 13px;
}
.big span {
    padding-top: 8px;
}
.big .caret {
    margin-top: 5px;
}
.big.wide {
    width: 52px;
}
.big.on {
    padding-top: 2px;
    border: 1px solid #c4c5c8;
    border-top: 2px solid #97989c;
    background: linear-gradient(#f4f4f5, #d9dadc);
}
.g-close .big {
    padding-top: 12px;
}
.g-close .big span {
    padding-top: 10px;
}
.col {
    display: flex;
    flex-direction: column;
    align-items: flex-start;
    gap: 1px;
}
.small {
    gap: 3px;
    height: 24px;
}
.small:disabled {
    color: #a4a6a9;
}

/* navigator */
.work {
    display: flex;
    flex: 1;
    min-height: 0;
}
.side {
    display: flex;
    flex-direction: column;
    width: 300px;
    margin: 13px 0 11px 4px;
}
.sidetabs {
    display: flex;
    position: relative;
    height: 30px;
    margin-bottom: -1px;
}
.sidetabs button {
    width: 30px;
    border: 1px solid #c8cacd;
    border-left: none;
    background-color: #eef0f0;
}
.sidetabs .on {
    border-left: 1px solid #c8cacd;
    border-bottom-color: #fbfbfe;
    background-color: #fbfbfe;
}
.panel {
    flex: 1;
    border: 1px solid #c8cacd;
    border-right-width: 3px;
    border-bottom-width: 2px;
}
.panelhead {
    display: flex;
    align-items: center;
    height: 29px;
    padding: 0 4px 0 20px;
    border-bottom: 1px solid #c8cacd;
}
.panelhead h2 {
    flex: 1;
    font-size: 13px;
}
.panelhead .arrow {
    width: 22px;
    height: 20px;
}
.panelhead .hide {
    margin-left: 5px;
}
.modeltree {
    padding-top: 6px;
    list-style: none;
}
.modeltree li {
    display: flex;
    align-items: center;
    gap: 5px;
    height: 24px;
    padding-left: 30px;
    color: #4b4d52;
}
.modeltree .root {
    gap: 6px;
    padding-left: 11px;
}
.modeltree .more {
    padding-left: 16px;
}
.modeltree .more::before {
    content: "";
    width: 0;
    margin-right: 2px;
    border-left: 7px solid #88898c;
    border-top: 4px solid transparent;
    border-bottom: 4px solid transparent;
}

/* graphics area */
.canvas {
    flex: 1;
    position: relative;
}
.viewbar {
    display: flex;
    width: max-content;
    height: 28px;
    margin: 7px auto 0;
    padding: 0 5px 0 4px;
    border: 1px solid #c8c9cb;
    background-color: #eef0f0;
}
.viewbar button {
    position: relative;
    width: 27px;
    border-left: 1px solid #c8c9cb;
    background-color: #fff;
}
.viewbar .menu,
.viewbar button:last-child {
    width: 28px;
}
.viewbar button:last-child {
    border-right: 1px solid #c8c9cb;
}
.viewbar .on {
    box-shadow: inset 0 2px 0 #96979b;
    background: linear-gradient(#f0f0f2, #dcdde0);
}
.viewbar .menu::after {
    content: "";
    position: absolute;
    right: 2px;
    bottom: 3px;
    border-left: 4px solid transparent;
    border-bottom: 4px solid #555;
}
.beam {
    position: absolute;
    left: 396px;
    top: 218px;
    width: 770px;
    height: 320px;
}
.beamname {
    fill: #84dc3c;
    font: 14px "Liberation Mono", monospace;
}
.edge, .leader {
    fill: none;
    stroke: #78dc28;
}
.tag {
    position: absolute;
    left: 709px;
    top: 568px;
    width: 40px;
    height: 24px;
}
.note {
    position: absolute;
    left: 505px;
    top: 624px;
    color: #f9302c;
    font: 300 27px/40px "Noto Sans CJK SC", sans-serif;
    white-space: nowrap;
}
.note span {
    font-family: Roboto, sans-serif;
    font-weight: 400;
}
.mode {
    position: absolute;
    left: 10px;
    bottom: 48px;
    display: flex;
    align-items: center;
    gap: 9px;
    color: #6d6e70;
    font-size: 8px;
    font-weight: 500;
    line-height: 16px;
}
.mode b {
    font: 300 12px/16px Roboto, sans-serif;
}
.wcs {
    position: absolute;
    right: 4px;
    bottom: 0;
    width: 112px;
    height: 123px;
    fill: #77797b;
    font: 12px "Liberation Mono", monospace;
}
.wcsname {
    font-size: 14px;
}

/* status bar */
.status {
    display: flex;
    align-items: center;
    height: 33px;
    padding-left: 6px;
    border-top: 2px solid #98999b;
    background-color: #eef0f0;
}
.status > button {
    width: 22px;
    height: 22px;
    margin-right: 4px;
    border: 1px solid #c4c6c8;
    background-color: #fafafa;
}
.status .on {
    border-top: 2px solid #97989c;
    background: linear-gradient(#f0f0f1, #dcddde);
}
.msg {
    display: flex;
    align-items: center;
    flex: 1;
    height: 24px;
    margin-left: 5px;
    border-left: 1px solid #ccced0;
    padding-left: 7px;
    font-size: 11px;
}
.msg::before {
    content: "";
    width: 5px;
    height: 5px;
    margin-right: 5px;
    border-radius: 50%;
    background-color: #145f87;
}
.cell {
    display: flex;
    align-items: center;
    height: 25px;
    border-left: 1px solid #ccced0;
}
.blank { width: 30px; }
.lights {
    gap: 1px;
    width: 36px;
    padding-left: 6px;
}
.lights i {
    width: 6px;
    height: 6px;
    border-radius: 50%;
    background-color: #cfd0d2;
}
.lights i:first-child {
    width: 10px;
    height: 10px;
    margin-right: 1px;
    background-color: #50ce42;
}
.cell.flag {
    width: 41px;
    padding-left: 6px;
}
.find {
    width: 47px;
    padding-left: 3px;
}
.find button {
    width: 40px;
    height: 23px;
    border: 1px solid #b3b5b7;
    border-radius: 3px;
    background: linear-gradient(#fff, #e9eaea);
}
.filter {
    position: relative;
    width: 279px;
    padding-left: 96px;
}
.filter select {
    width: 164px;
    height: 19px;
    padding: 0 7px;
    appearance: none;
    border: 1px solid #c8cacc;
    border-radius: 0;
    background-color: #f5f6f6;
    color: #333;
    font: inherit;
    line-height: 16px;
}
.filter .caret {
    position: absolute;
    left: 249px;
    top: 10px;
}
.taskbar {
    position: relative;
    display: flex;
    height: 8px;
    overflow: hidden;
    background-color: #030308;
}
.search-slot {
    width: 344px;
    margin-left: 48px;
    background-color: #333334;
}
.app-slot {
    width: 48px;
    margin-left: 247px;
    background-color: #9d5a26;
}
.taskbar time {
    position: absolute;
    right: 74px;
    top: 3px;
    color: #fff;
}

/* forum watermark */
.watermark {
    position: absolute;
    right: 0;
    bottom: 5px;
    display: flex;
    width: 211px;
    height: 62px;
    background-color: rgba(255, 255, 255, 0.3);
    pointer-events: none;
}
.watermark svg {
    width: 60px;
    height: 60px;
    opacity: 0.9;
}
.watermark div {
    display: flex;
    flex-direction: column;
}
.watermark strong {
    padding-left: 10px;
    color: rgba(120, 205, 155, 0.75);
    font: 900 29px/38px "Noto Sans CJK SC", sans-serif;
}
.watermark span {
    color: rgba(150, 195, 220, 0.65);
    font: 15px/18px "Open Sans", sans-serif;
}
```
